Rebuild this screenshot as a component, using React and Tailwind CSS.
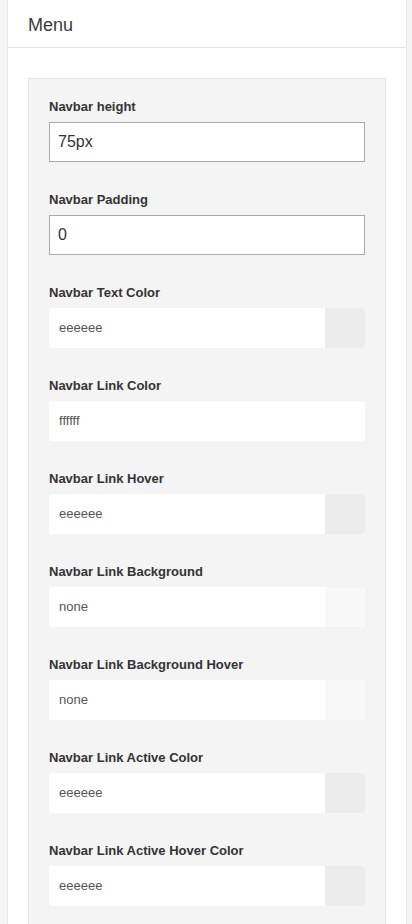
import React from "react";

const font = { fontFamily: '"Liberation Sans", Arial, sans-serif' };

function TextField({ label, value }) {
  return (
    <div className="mb-[29px]">
      <div className="text-[13px] leading-[18px] font-bold text-[#333] mb-[6px]">{label}</div>
      <div className="h-[40px] border border-[#a9a9a9] bg-white flex items-center pl-[8px] text-[16px] text-[#333]">
        {value}
      </div>
    </div>
  );
}

function ColorField({ label, value, swatch }) {
  return (
    <div className="mb-[29px]">
      <div className="text-[13px] leading-[18px] font-bold text-[#333] mb-[6px]">{label}</div>
      <div className="h-[40px] bg-white rounded-[3px] flex items-stretch overflow-hidden">
        <div className="flex-1 flex items-center pl-[10px] text-[13px] text-[#555]">{value}</div>
        <div className={"w-[40px] rounded-r-[3px] " + swatch}></div>
      </div>
    </div>
  );
}

export default function App() {
  return (
    <div className="min-h-[924px] bg-[#f4f4f4] pl-[7px] pr-[5px]" style={font}>
      <div className="min-h-[924px] bg-white border-x border-[#e6e6e6]">
        <div className="h-[48px] border-b border-[#e3e3e3] flex items-center pl-[20px] pt-[3px] text-[18px] text-[#3a3a3a]">
          Menu
        </div>
        <div className="pt-[30px] px-[20px]">
          <div className="border border-[#e3e3e3] bg-[#f4f4f4] pt-[19px] px-[20px] pb-[10px]">
            <TextField label="Navbar height" value="75px" />
            <TextField label="Navbar Padding" value="0" />
            <ColorField label="Navbar Text Color" value="eeeeee" swatch="bg-[#ececec]" />
            <ColorField label="Navbar Link Color" value="ffffff" swatch="bg-white" />
            <ColorField label="Navbar Link Hover" value="eeeeee" swatch="bg-[#ececec]" />
            <ColorField label="Navbar Link Background" value="none" swatch="bg-[#f8f8f8]" />
            <ColorField label="Navbar Link Background Hover" value="none" swatch="bg-[#f8f8f8]" />
            <ColorField label="Navbar Link Active Color" value="eeeeee" swatch="bg-[#ececec]" />
            <ColorField label="Navbar Link Active Hover Color" value="eeeeee" swatch="bg-[#ececec]" />
          </div>
        </div>
      </div>
    </div>
  );
}
